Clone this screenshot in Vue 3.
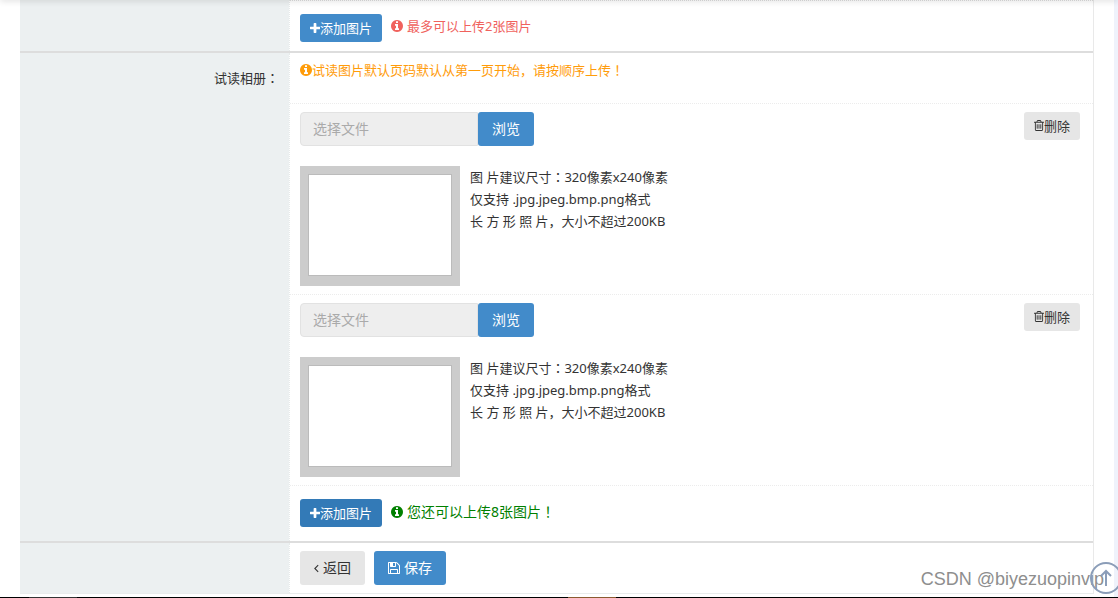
<template>
  <div class="page">
    <div class="top-shadow"></div>

    <form class="sheet" @submit.prevent>
      <section class="row">
        <div class="label"></div>
        <div class="field">
          <div class="add-line add-line-first">
            <button type="button" class="btn btn-sm btn-primary">
              <svg class="ico-plus" viewBox="192 128 1408 1408"><path :d="icons.plus" /></svg>添加图片
            </button>
            <span class="hint hint-danger">
              <svg class="ico-info" viewBox="128 128 1536 1536"><path :d="icons.info" /></svg>
              <span>最多可以上传2张图片</span>
            </span>
          </div>
        </div>
      </section>

      <section class="row" role="group" aria-labelledby="album-label">
        <div id="album-label" class="label">试读相册<span class="mid">：</span></div>
        <div class="field">
          <p class="notice">
            <svg class="ico-info" viewBox="128 128 1536 1536"><path :d="icons.info" /></svg>
            <span>试读图片默认页码默认从第一页开始，请按顺序上传<span class="mid">！</span></span>
          </p>

          <div v-for="slot in slots" :key="slot" class="slot">
            <div class="slot-head">
              <div class="picker">
                <input type="text" readonly placeholder="选择文件" :aria-label="'选择文件 ' + slot" />
                <button type="button" class="btn btn-md btn-primary">浏览</button>
              </div>
              <button type="button" class="btn btn-sm btn-default">
                <svg class="ico-trash" viewBox="192 128 1408 1536"><path :d="icons.trash" /></svg>删除
              </button>
            </div>
            <div class="slot-body">
              <div class="preview"></div>
              <div class="tips">
                图 片建议尺寸<span class="mid">：</span>320像素x240像素<br />
                仅支持 .jpg.jpeg.bmp.png格式<br />
                长 方 形 照 片，大小不超过200KB
              </div>
            </div>
          </div>

          <div class="add-line">
            <button type="button" class="btn btn-sm btn-primary is-active">
              <svg class="ico-plus" viewBox="192 128 1408 1408"><path :d="icons.plus" /></svg>添加图片
            </button>
            <span class="hint hint-ok">
              <svg class="ico-info" viewBox="128 128 1536 1536"><path :d="icons.info" /></svg>
              <span>您还可以上传8张图片<span class="mid">！</span></span>
            </span>
          </div>
        </div>
      </section>

      <section class="row">
        <div class="label"></div>
        <div class="field actions">
          <button type="button" class="btn btn-md btn-default">
            <svg class="ico-angle" viewBox="0 0 6 10"><path d="M5 1 1 5l4 4" /></svg>返回
          </button>
          <button type="submit" class="btn btn-md btn-primary">
            <svg class="ico-save" viewBox="128 128 1536 1536"><path :d="icons.save" /></svg>保存
          </button>
        </div>
      </section>
    </form>

    <div class="watermark">CSDN @biyezuopinvip</div>
    <a href="#" class="to-top" aria-label="返回顶部">
      <svg viewBox="0 0 32 32">
        <circle cx="16" cy="16" r="15" />
        <path d="M16 24V9M11 14l5-5 5 5" />
      </svg>
    </a>
  </div>
  <div class="taskbar"><i class="task"></i><i class="task task-hot"></i></div>
</template>

<script setup>
const slots = [1, 2]

const bar = 'v576q0 14-9 23t-23 9h-64q-14 0-23-9t-9-23v-576q0-14 9-23t23-9h64q14 0 23 9t9 23z'

const icons = {
  plus: 'M1600 736v192q0 40-28 68t-68 28h-416v416q0 40-28 68t-68 28h-192q-40 0-68-28t-28-68v-416h-416q-40 0-68-28t-28-68v-192q0-40 28-68t68-28h416v-416q0-40 28-68t68-28h192q40 0 68 28t28 68v416h416q40 0 68 28t28 68z',
  info: 'M1152 1376v-160q0-14-9-23t-23-9h-96v-512q0-14-9-23t-23-9h-320q-14 0-23 9t-9 23v160q0 14 9 23t23 9h96v320h-96q-14 0-23 9t-9 23v160q0 14 9 23t23 9h448q14 0 23-9t9-23zm-128-896v-160q0-14-9-23t-23-9h-192q-14 0-23 9t-9 23v160q0 14 9 23t23 9h192q14 0 23-9t9-23zm640 416q0 209-103 385.5t-279.5 279.5-385.5 103-385.5-103-279.5-279.5-103-385.5 103-385.5 279.5-279.5 385.5-103 385.5 103 279.5 279.5 103 385.5z',
  trash: `M704 736${bar}M960 736${bar}M1216 736${bar}M1344 1460v-948h-896v948q0 22 7 40.5t14.5 27 10.5 8.5h832q3 0 10.5-8.5t14.5-27 7-40.5zm-672-1076h448l-48-117q-7-9-17-11h-317q-10 2-17 11zm928 32v64q0 14-9 23t-23 9h-96v948q0 83-47 143.5t-113 60.5h-832q-66 0-113-58.5t-47-141.5v-952h-96q-14 0-23-9t-9-23v-64q0-14 9-23t23-9h309l70-167q15-37 54-63t79-26h320q40 0 79 26t54 63l70 167h309q14 0 23 9t9 23z`,
  save: 'M512 1536h768v-384h-768v384zm896 0h128v-896q0-14-10-38.5t-20-34.5l-281-281q-10-10-34-20t-39-10v416q0 40-28 68t-68 28h-576q-40 0-68-28t-28-68v-416h-128v1280h128v-416q0-40 28-68t68-28h832q40 0 68 28t28 68v416zm-384-928v-320q0-13-9.5-22.5t-22.5-9.5h-192q-13 0-22.5 9.5t-9.5 22.5v320q0 13 9.5 22.5t22.5 9.5h192q13 0 22.5-9.5t9.5-22.5zm640 32v928q0 40-28 68t-68 28h-1344q-40 0-68-28t-28-68v-1344q0-40 28-68t68-28h928q40 0 88 20t76 48l280 280q28 28 48 76t20 88z',
}
</script>

<style>
body {
  background: #fff;
  overflow: hidden;
}
</style>

<style scoped>
.page {
  position: relative;
  padding: 0 20px 3px;
  border-right: 4px solid #eff2fb;
  font: 13px/22px 'Noto Sans', 'Noto Sans CJK SC', sans-serif;
  color: #333;
}
.top-shadow {
  position: absolute;
  top: -2px;
  left: 0;
  right: -4px;
  height: 2px;
  box-shadow: 0 0 6px rgba(0, 0, 0, 0.3);
}

.sheet {
  border-right: 1px solid #e9e9e9;
  border-bottom: 1px solid #e9ecec;
}
.row {
  display: flex;
}
.row + .row {
  border-top: 2px solid #ddd;
}
.label {
  box-sizing: border-box;
  flex: none;
  width: 270px;
  padding: 14px 10px 0 0;
  border-right: 1px dotted #e6eaea;
  background: #ecf0f1;
  background-clip: padding-box;
  text-align: right;
}
.field {
  flex: 1;
  min-width: 0;
}
/* Full-width marks with the dot in the middle of the cell */
.mid {
  font-family: 'Noto Sans CJK JP', sans-serif;
}

.add-line {
  display: flex;
  align-items: flex-start;
  gap: 9px;
  padding: 13px 10px 14px;
}
.add-line-first {
  padding-bottom: 9px;
  border-top: 1px dotted #ddd;
}
.hint {
  display: flex;
  align-items: center;
  gap: 4px;
  line-height: 24px;
}
.hint-danger {
  color: #f0625d;
}
.hint-ok {
  font-size: 14px;
  color: #008000;
}

.notice {
  display: flex;
  align-items: center;
  margin: 0;
  padding: 6px 10px 22px;
  border-bottom: 1px dotted #ececec;
  color: #ff9c0a;
}
.slot {
  padding: 8px 13px 8px 10px;
  border-bottom: 1px dotted #ececec;
}
.slot-head {
  display: flex;
  justify-content: space-between;
  align-items: flex-start;
}
.picker {
  display: flex;
}
.picker input {
  box-sizing: border-box;
  width: 178px;
  height: 34px;
  padding: 0 12px 2px;
  border: 1px solid #e2e2e2;
  border-radius: 4px 0 0 4px;
  background: #eee;
  font: inherit;
  font-size: 14px;
  color: #555;
}
.picker input::placeholder {
  color: #aaa;
}
.slot-body {
  display: flex;
  gap: 10px;
  margin-top: 20px;
}
.preview {
  box-sizing: border-box;
  width: 160px;
  height: 120px;
  border: 8px solid #ccc;
  border-bottom-width: 10px;
  background: #fff;
  box-shadow: inset 0 0 0 1px #bbb;
}

.actions {
  display: flex;
  gap: 9px;
  padding: 8px 10px;
}
.btn {
  display: inline-flex;
  align-items: center;
  justify-content: center;
  border: 0;
  border-radius: 3px;
  font: inherit;
  white-space: nowrap;
  cursor: pointer;
}
.btn-sm {
  height: 28px;
  padding: 0 10px 1px;
}
.btn-md {
  height: 34px;
  padding: 0 14px;
  font-size: 14px;
}
.btn-primary {
  background: #428bca;
  color: #fff;
}
.btn-primary.is-active {
  background: #337ab7;
}
.btn-default {
  background: #e6e6e6;
  color: #333;
}

svg {
  flex: none;
  fill: currentColor;
}
.ico-plus {
  width: 10px;
  height: 10px;
}
.ico-info {
  width: 12px;
  height: 12px;
}
.ico-trash {
  width: 10px;
  height: 11px;
}
.ico-save {
  width: 12px;
  height: 12px;
  margin-right: 4px;
}
.ico-angle {
  width: 5px;
  height: 9px;
  margin-right: 4px;
  fill: none;
  stroke: currentColor;
  stroke-width: 1.3;
}

.to-top {
  position: absolute;
  right: -8px;
  bottom: 3px;
  width: 32px;
  height: 32px;
}
.to-top svg {
  display: block;
  fill: none;
  stroke: #8b9db8;
  stroke-width: 2;
}
.watermark {
  position: absolute;
  right: 10px;
  bottom: 7px;
  font: 18px/22px 'Liberation Sans', sans-serif;
  color: #8e8e8e;
  text-shadow: -1px -1px 0 #fff;
}

.taskbar {
  display: flex;
  height: 1px;
  padding-left: 29px;
  background: #000;
}
.task {
  width: 48px;
  background: #333;
}
.task-hot {
  margin-left: 491px;
  background: #8a5a30;
}
</style>
